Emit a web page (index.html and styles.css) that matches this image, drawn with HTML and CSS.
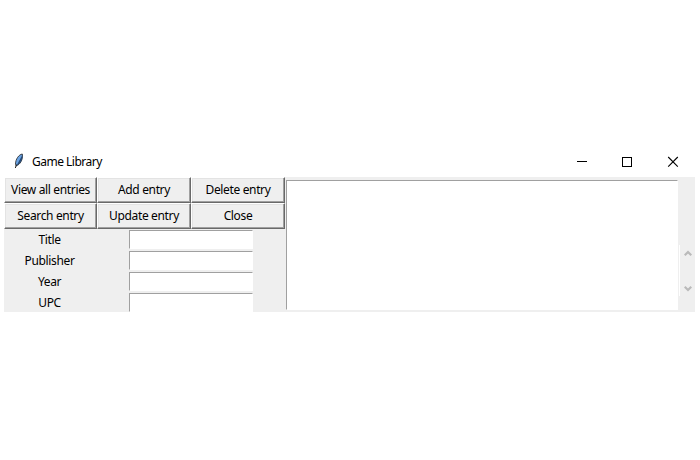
FILE: index.html
```html
<!DOCTYPE html>
<html lang="en">
<head>
<meta charset="utf-8">
<title>Game Library</title>
<link rel="stylesheet" href="styles.css">
</head>
<body>
<main class="window">
  <header class="titlebar">
    <svg class="feather" width="12" height="18" viewBox="0 0 12 18" aria-hidden="true">
      <path d="M9.3 2 C6 2.5 2.5 7 2.5 12 L3.2 14 C7 12.5 10.2 8 9.3 2Z" fill="#6ba3e3" stroke="#222" stroke-width=".8"/>
      <path d="M9.4 3 C10 7 7.5 11.5 3.6 13.5 L6.3 8.5Z" fill="#264a76"/>
      <path d="M3.6 12.5 L2.3 16" stroke="#222" stroke-width="1"/>
    </svg>
    <h1 class="title">Game Library</h1>
    <div class="controls">
      <svg width="10" height="11" viewBox="0 0 10 11" shape-rendering="crispEdges"><path d="M0 5.5H10" stroke="#000"/></svg>
      <svg width="10" height="11" viewBox="0 0 10 11" shape-rendering="crispEdges"><path d="M.5 1.5H9.5V10.5H.5Z" fill="none" stroke="#000"/></svg>
      <svg class="close" width="10" height="11" viewBox="0 0 10 11"><path d="M.2 1L9.8 10.6M9.8 1L.2 10.6" stroke="#000" stroke-width="1.1"/></svg>
    </div>
  </header>
  <div class="client">
    <section class="left">
      <div class="buttons">
        <button class="btn">View all entries</button>
        <button class="btn">Add entry</button>
        <button class="btn">Delete entry</button>
        <button class="btn">Search entry</button>
        <button class="btn">Update entry</button>
        <button class="btn">Close</button>
      </div>
      <div class="form">
        <label class="row"><span class="label">Title</span><input class="entry"></label>
        <label class="row"><span class="label">Publisher</span><input class="entry"></label>
        <label class="row"><span class="label">Year</span><input class="entry"></label>
        <label class="row"><span class="label">UPC</span><input class="entry"></label>
      </div>
    </section>
    <div class="listbox"></div>
    <div class="scrollbar">
      <svg width="8" height="7" viewBox="0 0 8 7"><path d="M.7 5.3L4 2L7.3 5.3" fill="none" stroke="#bababa" stroke-width="2.2"/></svg>
      <svg width="8" height="7" viewBox="0 0 8 7"><path d="M.7 1.7L4 5L7.3 1.7" fill="none" stroke="#bababa" stroke-width="2.2"/></svg>
    </div>
  </div>
</main>
</body>
</html>
```
FILE: styles.css
```css
* { box-sizing: border-box; }
body {
  margin: 0;
  background: #fff;
  color: #000;
  font: 12px/16px "Noto Sans", "Open Sans", sans-serif;
  letter-spacing: -0.35px;
}
.window { width: 691px; margin: 145px 0 0 4px; }
.titlebar { display: flex; align-items: center; height: 32px; padding: 0 17px 0 9px; }
.feather { display: block; }
.title { margin: 0 0 0 7px; padding-top: 2px; font-size: 12px; font-weight: 400; letter-spacing: -0.5px; }
.controls { display: flex; gap: 35px; margin-left: auto; }
.controls svg { display: block; overflow: visible; }
.controls .close { margin-left: 1px; }
.client { display: flex; height: 135px; background: #efefef; }
.left { width: 281px; }
.buttons { display: grid; grid-template-columns: 93px 94px 94px; grid-auto-rows: 26px; }
.btn {
  padding: 0;
  border: 1px solid;
  border-color: #fff #696969 #696969 #fff;
  border-radius: 0;
  background: #efefef;
  box-shadow: inset -1px -1px #a0a0a0, inset 1px 1px #e3e3e3;
  color: #000;
  font: inherit;
  letter-spacing: inherit;
}
.form { padding-top: 1px; }
.row { display: flex; height: 21px; }
.label { width: 91px; margin-right: 34px; line-height: 20px; text-align: center; }
.entry {
  width: 124px;
  height: 19px;
  padding: 0 2px;
  border: 1px solid;
  border-color: #a0a0a0 #fff #fff #a0a0a0;
  border-radius: 0;
  outline: 0;
  background: #fff;
  font: inherit;
}
.listbox {
  width: 392px;
  height: 130px;
  margin: 3px 1px 0;
  border: 1px solid;
  border-color: #a0a0a0 #fff #fff #a0a0a0;
  background: #fff;
}
.scrollbar {
  display: flex;
  flex-direction: column;
  align-items: center;
  justify-content: space-between;
  width: 16px;
  height: 51px;
  margin-top: 68px;
  padding: 5px 0 4px;
  border-left: 1px solid #fff;
}
.scrollbar svg { display: block; }
```
